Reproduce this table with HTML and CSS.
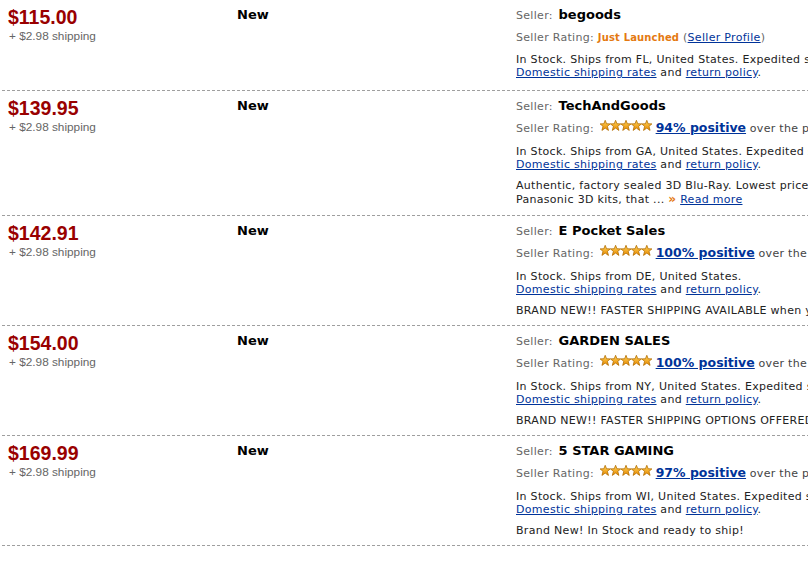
FILE: index.html
```html
<!DOCTYPE html>
<html>
<head>
<meta charset="utf-8">
<title>Offers</title>
<link rel="stylesheet" href="styles.css">
</head>
<body>
<svg class="defs" width="0" height="0" aria-hidden="true">
  <defs>
    <linearGradient id="sg" x1="0" y1="0" x2="0" y2="1">
      <stop offset="0" stop-color="#ffd45a"/>
      <stop offset="1" stop-color="#e88a00"/>
    </linearGradient>
    <polygon id="star" points="5.2,0.3 6.55,3.75 10.3,3.9 7.4,6.3 8.45,10.4 5.2,8.1 1.95,10.4 3.0,6.3 0.1,3.9 3.85,3.75" fill="url(#sg)" stroke="#b26d00" stroke-width="0.8" stroke-linejoin="round"/>
  </defs>
</svg>
<div class="list">

  <div class="offer">
    <div class="c-price"><div class="price">$115.00</div><div class="ship">+ $2.98 shipping</div></div>
    <div class="c-cond">New</div>
    <div class="c-seller">
      <div class="seller"><span class="lbl">Seller:</span> <b class="name">begoods</b></div>
      <div class="rating plain"><span class="lbl">Seller Rating:</span> <span class="launched">Just Launched</span> (<a href="#">Seller Profile</a>)</div>
      <div class="stock">In Stock. Ships from FL, United States. Expedited shipping available.<br><a href="#">Domestic shipping rates</a> and <a href="#">return policy</a>.</div>
    </div>
  </div>

  <div class="offer">
    <div class="c-price"><div class="price">$139.95</div><div class="ship">+ $2.98 shipping</div></div>
    <div class="c-cond">New</div>
    <div class="c-seller">
      <div class="seller"><span class="lbl">Seller:</span> <b class="name">TechAndGoods</b></div>
      <div class="rating"><span class="lbl">Seller Rating:</span> <svg class="stars" width="52" height="11" viewBox="0 0 52 11"><use href="#star" x="0"/><use href="#star" x="10.4"/><use href="#star" x="20.8"/><use href="#star" x="31.2"/><use href="#star" x="41.6"/></svg> <a class="pos" href="#">94% positive</a> <span class="over">over the past 12 months. (1,284 total ratings)</span></div>
      <div class="stock">In Stock. Ships from GA, United States. Expedited shipping available.<br><a href="#">Domestic shipping rates</a> and <a href="#">return policy</a>.</div>
      <div class="comment"><div>Authentic, factory sealed 3D Blu-Ray. Lowest price on the web for these</div><div class="l2">Panasonic 3D kits, that ... <span class="raquo">&raquo;</span> <a href="#">Read more</a></div></div>
    </div>
  </div>

  <div class="offer">
    <div class="c-price"><div class="price">$142.91</div><div class="ship">+ $2.98 shipping</div></div>
    <div class="c-cond">New</div>
    <div class="c-seller">
      <div class="seller"><span class="lbl">Seller:</span> <b class="name">E Pocket Sales</b></div>
      <div class="rating"><span class="lbl">Seller Rating:</span> <svg class="stars" width="52" height="11" viewBox="0 0 52 11"><use href="#star" x="0"/><use href="#star" x="10.4"/><use href="#star" x="20.8"/><use href="#star" x="31.2"/><use href="#star" x="41.6"/></svg> <a class="pos" href="#">100% positive</a> <span class="over">over the past 12 months. (412 total ratings)</span></div>
      <div class="stock">In Stock. Ships from DE, United States.<br><a href="#">Domestic shipping rates</a> and <a href="#">return policy</a>.</div>
      <div class="comment"><div>BRAND NEW!! FASTER SHIPPING AVAILABLE when you choose expedited</div></div>
    </div>
  </div>

  <div class="offer">
    <div class="c-price"><div class="price">$154.00</div><div class="ship">+ $2.98 shipping</div></div>
    <div class="c-cond">New</div>
    <div class="c-seller">
      <div class="seller"><span class="lbl">Seller:</span> <b class="name">GARDEN SALES</b></div>
      <div class="rating"><span class="lbl">Seller Rating:</span> <svg class="stars" width="52" height="11" viewBox="0 0 52 11"><use href="#star" x="0"/><use href="#star" x="10.4"/><use href="#star" x="20.8"/><use href="#star" x="31.2"/><use href="#star" x="41.6"/></svg> <a class="pos" href="#">100% positive</a> <span class="over">over the past 12 months. (87 total ratings)</span></div>
      <div class="stock">In Stock. Ships from NY, United States. Expedited shipping available.<br><a href="#">Domestic shipping rates</a> and <a href="#">return policy</a>.</div>
      <div class="comment"><div>BRAND NEW!! FASTER SHIPPING OPTIONS OFFERED AT CHECKOUT</div></div>
    </div>
  </div>

  <div class="offer">
    <div class="c-price"><div class="price">$169.99</div><div class="ship">+ $2.98 shipping</div></div>
    <div class="c-cond">New</div>
    <div class="c-seller">
      <div class="seller"><span class="lbl">Seller:</span> <b class="name">5 STAR GAMING</b></div>
      <div class="rating"><span class="lbl">Seller Rating:</span> <svg class="stars" width="52" height="11" viewBox="0 0 52 11"><use href="#star" x="0"/><use href="#star" x="10.4"/><use href="#star" x="20.8"/><use href="#star" x="31.2"/><use href="#star" x="41.6"/></svg> <a class="pos" href="#">97% positive</a> <span class="over">over the past 12 months. (2,031 total ratings)</span></div>
      <div class="stock">In Stock. Ships from WI, United States. Expedited shipping available.<br><a href="#">Domestic shipping rates</a> and <a href="#">return policy</a>.</div>
      <div class="comment"><div>Brand New! In Stock and ready to ship!</div></div>
    </div>
  </div>

</div>
</body>
</html>
```

FILE: styles.css
```css
html, body {
  margin: 0;
  padding: 0;
  background: #fff;
}
body {
  width: 808px;
  height: 578px;
  overflow: hidden;
}
.defs {
  position: absolute;
  width: 0;
  height: 0;
}
.list {
  margin-left: 2px;
  width: 1150px;
}
.offer {
  display: grid;
  grid-template-columns: 235px 279px 1fr;
  padding: 6px 0 9px;
  background: repeating-linear-gradient(to right, #9f9f9f 0 3px, transparent 3px 5px) left bottom / 100% 1px no-repeat;
}
.c-price {
  padding-left: 6px;
  margin-top: -1px;
}
.price {
  font: bold 19.5px/24px "Liberation Sans", Arial, sans-serif;
  color: #990000;
}
.ship {
  font: 11.8px/13px "Liberation Sans", Arial, sans-serif;
  color: #666;
  padding-left: 1px;
  margin-top: 1px;
}
.c-cond {
  font: bold 13px/18px "DejaVu Sans", Verdana, sans-serif;
  color: #000;
}
.c-seller {
  font: 11px/13px "DejaVu Sans", Verdana, sans-serif;
  letter-spacing: 0.3px;
  color: #222;
  white-space: nowrap;
}
.c-seller a {
  color: #003399;
  text-decoration: underline;
}
.seller, .rating {
  height: 18px;
  line-height: 18px;
  color: #666;
}
.rating {
  margin-top: 4px;
}
.rating.plain {
  height: 16px;
  margin-top: 5px;
}
.name {
  font-size: 13px;
  font-weight: bold;
  color: #000;
  letter-spacing: 0;
  margin-left: 2px;
}
.launched {
  font-size: 10px;
  font-weight: bold;
  color: #e47911;
  letter-spacing: 0.15px;
}
.stars {
  vertical-align: 1px;
  margin-left: 2px;
}
.c-seller a.pos {
  font-size: 12.5px;
  font-weight: bold;
  letter-spacing: 0;
}
.over {
  color: #444;
}
.stock {
  margin-top: 8px;
  line-height: 13px;
}
.stock:last-child {
  margin-bottom: 3px;
}
.comment {
  margin-top: 8px;
  line-height: 13px;
}
.l2 {
  height: 15px;
  line-height: 15px;
}
.raquo {
  color: #e47911;
  font-weight: bold;
  font-size: 12px;
}
```
